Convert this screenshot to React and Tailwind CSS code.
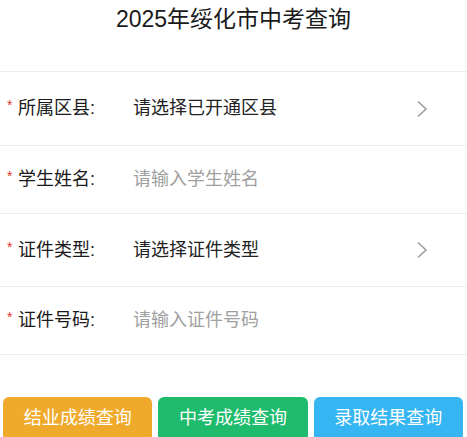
import { useState } from "react";

const rows = [
  { label: "所属区县", value: "请选择已开通区县", select: true, h: "h-[74px]" },
  { label: "学生姓名", placeholder: "请输入学生姓名", h: "h-[68px]" },
  { label: "证件类型", value: "请选择证件类型", select: true, h: "h-[73px]" },
  { label: "证件号码", placeholder: "请输入证件号码", h: "h-[68px]" },
];

const buttons = [
  { text: "结业成绩查询", color: "bg-[#f0aa2b]" },
  { text: "中考成绩查询", color: "bg-[#1fbb6d]" },
  { text: "录取结果查询", color: "bg-[#35b5f1]" },
];

function Chevron() {
  return (
    <svg width="12" height="18" viewBox="0 0 12 18" className="mr-[39px]">
      <polyline points="2,1.5 10,9 2,16.5" fill="none" stroke="#9a9a9a" strokeWidth="1.5" />
    </svg>
  );
}

function FormRow({ row }) {
  const [text, setText] = useState("");
  return (
    <div className={`flex items-center border-b border-[#eeeeee] ${row.h}`}>
      <span className="w-[18px] self-center pl-[7px] text-[14px] leading-none text-[#e2352f] -mt-[7px]">*</span>
      <span className="w-[115px] text-[18px] text-[#1a1a1a]">{row.label}:</span>
      {row.select ? (
        <>
          <span className="flex-1 text-[18px] text-[#222]">{row.value}</span>
          <Chevron />
        </>
      ) : (
        <input
          value={text}
          onChange={(e) => setText(e.target.value)}
          placeholder={row.placeholder}
          className="flex-1 bg-transparent text-[18px] text-[#333] outline-none placeholder:text-[#a0a0a0]"
        />
      )}
    </div>
  );
}

export default function App() {
  return (
    <div
      className="h-[437px] w-[467px] overflow-hidden bg-white"
      style={{ fontFamily: '"Liberation Sans", "Noto Sans CJK SC", sans-serif' }}
    >
      <h1 className="pt-[4px] text-center text-[23px] leading-[30px] text-[#1a1a1a]">2025年绥化市中考查询</h1>
      <div className="mt-[37px] border-t border-[#eeeeee]">
        {rows.map((row) => (
          <FormRow key={row.label} row={row} />
        ))}
      </div>
      <div className="mt-[42px] flex gap-[6px] pl-[3px] pr-[4px]">
        {buttons.map((b) => (
          <button
            key={b.text}
            className={`h-[44px] flex-1 rounded-[6px] pb-[2px] text-[18px] text-white ${b.color}`}
          >
            {b.text}
          </button>
        ))}
      </div>
    </div>
  );
}
